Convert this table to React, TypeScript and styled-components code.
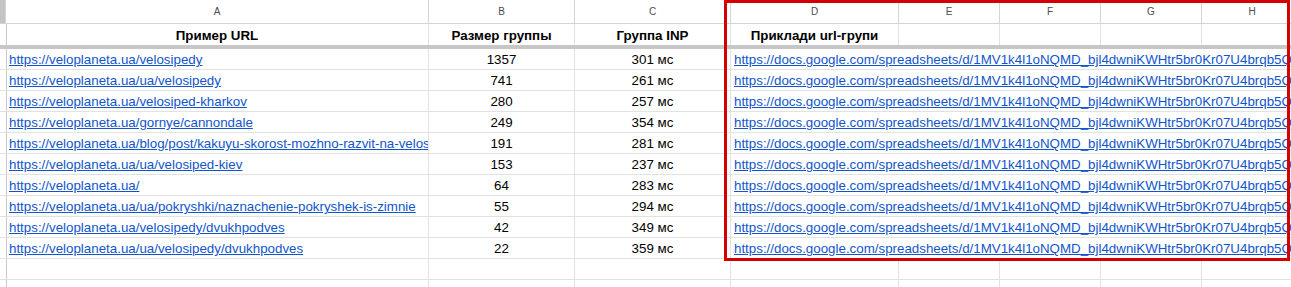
import React from "react";
import styled, { createGlobalStyle, css } from "styled-components";

const GlobalStyle = createGlobalStyle`
    html, body {
        margin: 0;
        padding: 0;
        background: #ffffff;
        overflow: hidden;
    }
    body {
        font-family: "Liberation Sans", Arial, sans-serif;
    }
`;

const GRID = "#e2e2e2";
const HEAD_GRID = "#d4d4d4";

const Viewport = styled.div`
    position: relative;
    width: 1291px;
    height: 287px;
    overflow: hidden;
`;

const Sheet = styled.div`
    display: grid;
    grid-template-columns: 6px 423px 146px 156px 168px 101px 101px 101px 101px;
    grid-template-rows: 24px 21px 4px;
    grid-auto-rows: 21px;
    width: max-content;
    font-size: 13.333px;
    color: #000;
`;

const ColHead = styled.div<{ $corner?: boolean }>`
    box-sizing: border-box;
    border-right: 1px solid ${HEAD_GRID};
    border-bottom: 1px solid ${HEAD_GRID};
    display: flex;
    align-items: center;
    justify-content: center;
    font-size: 10px;
    color: #4d4d4d;
    background: ${({ $corner }) => ($corner ? "#c4c4c4" : "#ffffff")};
`;

const FreezeBar = styled.div`
    grid-column: 1 / -1;
    background: #c7c7c7;
`;

const Cell = styled.div<{ $align?: "left" | "center"; $bold?: boolean; $span?: number; $gutter?: boolean; $flat?: boolean }>`
    box-sizing: border-box;
    border-right: 1px solid ${({ $gutter }) => ($gutter ? "#c9c9c9" : GRID)};
    border-bottom: ${({ $flat }) => ($flat ? "none" : `1px solid ${GRID}`)};
    padding: 0 3px 1px;
    display: flex;
    align-items: flex-end;
    justify-content: ${({ $align }) => ($align === "center" ? "center" : "flex-start")};
    line-height: 17px;
    white-space: nowrap;
    overflow: hidden;
    min-width: 0;
    ${({ $bold }) => $bold && css`font-weight: bold;`}
    ${({ $span }) => $span && css`grid-column: span ${$span};`}
`;

const Link = styled.a`
    color: #1155cc;
    text-decoration: underline;
    text-underline-offset: 1px;
`;

const Highlight = styled.div`
    position: absolute;
    left: 724px;
    top: 0;
    width: 566px;
    height: 261px;
    box-sizing: border-box;
    border: 3px solid #d40000;
    pointer-events: none;
`;

const letters = ["A", "B", "C", "D", "E", "F", "G", "H"];

const docLink =
    "https://docs.google.com/spreadsheets/d/1MV1k4l1oNQMD_bjl4dwniKWHtr5br0Kr07U4brqb5Q0/edit#gid=0";

const rows: [string, string, string][] = [
    ["https://veloplaneta.ua/velosipedy", "1357", "301 мс"],
    ["https://veloplaneta.ua/ua/velosipedy", "741", "261 мс"],
    ["https://veloplaneta.ua/velosiped-kharkov", "280", "257 мс"],
    ["https://veloplaneta.ua/gornye/cannondale", "249", "354 мс"],
    ["https://veloplaneta.ua/blog/post/kakuyu-skorost-mozhno-razvit-na-velosipede", "191", "281 мс"],
    ["https://veloplaneta.ua/ua/velosiped-kiev", "153", "237 мс"],
    ["https://veloplaneta.ua/", "64", "283 мс"],
    ["https://veloplaneta.ua/ua/pokryshki/naznachenie-pokryshek-is-zimnie", "55", "294 мс"],
    ["https://veloplaneta.ua/velosipedy/dvukhpodves", "42", "349 мс"],
    ["https://veloplaneta.ua/ua/velosipedy/dvukhpodves", "22", "359 мс"],
];

const EmptyRow: React.FC = () => (
    <>
        <Cell $gutter />
        {letters.map((l) => (
            <Cell key={l} />
        ))}
    </>
);

const App: React.FC = () => {
    return (
        <Viewport>
            <GlobalStyle />
            <Sheet>
                <ColHead $corner />
                {letters.map((l) => (
                    <ColHead key={l}>{l}</ColHead>
                ))}

                <Cell $gutter $flat />
                <Cell $flat $bold $align="center">Пример URL</Cell>
                <Cell $flat $bold $align="center">Размер группы</Cell>
                <Cell $flat $bold $align="center">Группа INP</Cell>
                <Cell $flat $bold $align="center">Приклади url-групи</Cell>
                <Cell $flat />
                <Cell $flat />
                <Cell $flat />
                <Cell $flat />
                <FreezeBar />

                {rows.map(([url, size, inp]) => (
                    <React.Fragment key={url}>
                        <Cell $gutter />
                        <Cell>
                            <Link>{url}</Link>
                        </Cell>
                        <Cell $align="center">{size}</Cell>
                        <Cell $align="center">{inp}</Cell>
                        <Cell $span={5}>
                            <Link>{docLink}</Link>
                        </Cell>
                    </React.Fragment>
                ))}

                <EmptyRow />
                <EmptyRow />
            </Sheet>
            <Highlight />
        </Viewport>
    );
};

export default App;
